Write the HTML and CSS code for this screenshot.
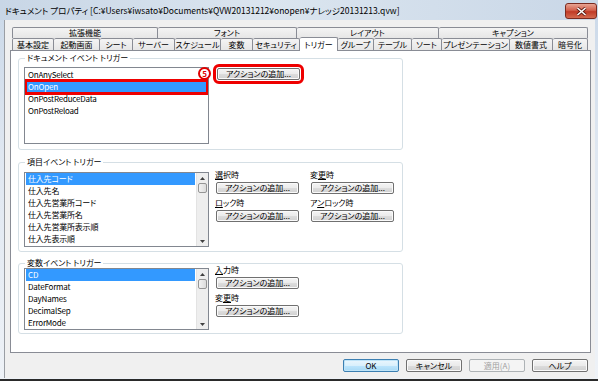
FILE: index.html
```html
<!DOCTYPE html>
<html lang="ja">
  <head>
    <meta charset="UTF-8" />
    <title>ドキュメント プロパティ</title>
    <link rel="stylesheet" href="styles.css">
  </head>
  <body>
    <div class="window">
      <div class="titlebar">
        <span class="title">ドキュメント プロパティ [C:¥Users¥iwsato¥Documents¥QVW20131212¥onopen¥ナレッジ20131213.qvw]</span>
        <span class="close">
          <svg width="11" height="9" viewBox="0 0 11 9">
            <path d="M1.5 1 L9.5 8 M9.5 1 L1.5 8" stroke="#5a1a12" stroke-width="3.2" />
            <path d="M1.5 1 L9.5 8 M9.5 1 L1.5 8" stroke="#ffffff" stroke-width="1.6" />
          </svg>
        </span>
      </div>

      <div class="client">
        <div class="tabs">
          <div class="tabrow upper">
            <div class="tab">拡張機能</div>
            <div class="tab">フォント</div>
            <div class="tab">レイアウト</div>
            <div class="tab">キャプション</div>
          </div>
          <div class="tabrow lower">
            <div class="tab">基本設定</div>
            <div class="tab">起動画面</div>
            <div class="tab">シート</div>
            <div class="tab">サーバー</div>
            <div class="tab">スケジュール</div>
            <div class="tab">変数</div>
            <div class="tab">セキュリティ</div>
            <div class="tab active">トリガー</div>
            <div class="tab">グループ</div>
            <div class="tab">テーブル</div>
            <div class="tab">ソート</div>
            <div class="tab">プレゼンテーション</div>
            <div class="tab">数値書式</div>
            <div class="tab">暗号化</div>
          </div>
        </div>

        <div class="panel">
          <fieldset class="group doc">
            <legend>ドキュメント イベント トリガー</legend>
            <div class="group-body">
              <div class="listbox">
                <ul class="items">
                  <li>OnAnySelect</li>
                  <li class="sel marked">OnOpen</li>
                  <li>OnPostReduceData</li>
                  <li>OnPostReload</li>
                </ul>
              </div>
              <div class="single">
                <span class="step">5</span>
                <button class="btn marked">アクションの追加...</button>
              </div>
            </div>
          </fieldset>

          <fieldset class="group field">
            <legend>項目イベント トリガー</legend>
            <div class="group-body">
              <div class="listbox">
                <ul class="items">
                  <li class="sel">仕入先コード</li>
                  <li>仕入先名</li>
                  <li>仕入先営業所コード</li>
                  <li>仕入先営業所名</li>
                  <li>仕入先営業所表示順</li>
                  <li>仕入先表示順</li>
                  <li>仕入先区分</li>
                </ul>
                <div class="scrollbar">
                  <div class="arrow"><svg width="5" height="3" viewBox="0 0 5 3"><path d="M0 3 L2.5 0 L5 3 Z" fill="#404040" /></svg></div>
                  <div class="thumb"></div>
                  <div class="track"></div>
                  <div class="arrow"><svg width="5" height="3" viewBox="0 0 5 3"><path d="M0 0 L2.5 3 L5 0 Z" fill="#404040" /></svg></div>
                </div>
              </div>
              <div class="actions two">
                <div class="action">
                  <div class="label"><u>選</u>択時</div>
                  <button class="btn">アクションの追加...</button>
                </div>
                <div class="action">
                  <div class="label">変<u>更</u>時</div>
                  <button class="btn">アクションの追加...</button>
                </div>
                <div class="action">
                  <div class="label"><u>ロ</u>ック時</div>
                  <button class="btn">アクションの追加...</button>
                </div>
                <div class="action">
                  <div class="label">ア<u>ン</u>ロック時</div>
                  <button class="btn">アクションの追加...</button>
                </div>
              </div>
            </div>
          </fieldset>

          <fieldset class="group vars">
            <legend>変数イベント トリガー</legend>
            <div class="group-body">
              <div class="listbox">
                <ul class="items">
                  <li class="sel">CD</li>
                  <li>DateFormat</li>
                  <li>DayNames</li>
                  <li>DecimalSep</li>
                  <li>ErrorMode</li>
                </ul>
                <div class="scrollbar">
                  <div class="arrow"><svg width="5" height="3" viewBox="0 0 5 3"><path d="M0 3 L2.5 0 L5 3 Z" fill="#404040" /></svg></div>
                  <div class="thumb"></div>
                  <div class="track"></div>
                  <div class="arrow"><svg width="5" height="3" viewBox="0 0 5 3"><path d="M0 0 L2.5 3 L5 0 Z" fill="#404040" /></svg></div>
                </div>
              </div>
              <div class="actions">
                <div class="action">
                  <div class="label"><u>入</u>力時</div>
                  <button class="btn">アクションの追加...</button>
                </div>
                <div class="action">
                  <div class="label">変<u>更</u>時</div>
                  <button class="btn">アクションの追加...</button>
                </div>
              </div>
            </div>
          </fieldset>
        </div>

        <div class="footer">
          <button class="btn wide default">OK</button>
          <button class="btn wide">キャンセル</button>
          <button class="btn wide" disabled>適用(A)</button>
          <button class="btn wide">ヘルプ</button>
        </div>
      </div>
    </div>
  </body>
</html>
```

FILE: styles.css
```css
body {
  margin: 0;
  background: #ffffff;
  font-family: "Noto Sans CJK JP", sans-serif;
  font-feature-settings: "palt";
  font-size: 8px;
  color: #000000;
}

.window {
  width: 598px;
  height: 381px;
  box-sizing: border-box;
  display: flex;
  flex-direction: column;
  background: linear-gradient(#cad8e8, #dfe7f1 40%, #eef2f7);
  border-bottom: 2px solid #2a2a2a;
}

.titlebar {
  height: 20px;
  display: flex;
  align-items: flex-start;
  padding-left: 5px;
  background: linear-gradient(90deg, #c8d6e6, #dbe5ef 45%, #c9d7e7);
}

.title {
  font-size: 8.5px;
  line-height: 20px;
  white-space: nowrap;
}

.close {
  margin: 3px 1px 0 auto;
  width: 30px;
  height: 14px;
  display: flex;
  align-items: center;
  justify-content: center;
  border: 1px solid #7a2b20;
  border-radius: 3px;
  background: linear-gradient(#e8a493, #d2604c 45%, #c03a26 55%, #d46a50);
}

.client {
  flex: 1;
  margin: 0 3px 1px 4px;
  padding: 7px 4px 0 5px;
  background: #f0f0f0;
  border-left: 1px solid #9a9ea4;
}

/* tabs */
.tabs {
  margin: 0 3px 0 2px;
}

.tabrow {
  display: flex;
}

.tab {
  flex: none;
  box-sizing: border-box;
  text-align: center;
  white-space: nowrap;
  border: 1px solid #898c95;
  border-left: none;
  border-bottom: none;
  border-radius: 2px 2px 0 0;
  background: linear-gradient(#f4f4f4, #e6e6e6);
}

.tab:first-child {
  border-left: 1px solid #898c95;
}

.upper .tab {
  height: 11px;
  line-height: 10px;
}

.upper .tab:nth-child(1) { width: 146px; }
.upper .tab:nth-child(2) { width: 139px; }
.upper .tab:nth-child(3) { width: 142px; }
.upper .tab:nth-child(4) { width: 149px; }

.lower .tab {
  height: 12px;
  line-height: 11px;
}

.lower .tab:nth-child(1) { width: 42px; }
.lower .tab:nth-child(2) { width: 46px; }
.lower .tab:nth-child(3) { width: 33px; }
.lower .tab:nth-child(4) { width: 42px; }
.lower .tab:nth-child(5) { width: 46px; }
.lower .tab:nth-child(6) { width: 32px; }
.lower .tab:nth-child(7) { width: 47px; }
.lower .tab:nth-child(8) { width: 38px; }
.lower .tab:nth-child(9) { width: 36px; }
.lower .tab:nth-child(10) { width: 38px; }
.lower .tab:nth-child(11) { width: 30px; }
.lower .tab:nth-child(12) { width: 68px; }
.lower .tab:nth-child(13) { width: 43px; }
.lower .tab:nth-child(14) { width: 35px; }

.lower .tab.active {
  position: relative;
  z-index: 1;
  height: 14px;
  margin-top: -1px;
  margin-bottom: -1px;
  line-height: 13px;
  background: #ffffff;
}

/* panel */
.panel {
  height: 303px;
  box-sizing: border-box;
  padding: 2px 0 0 7px;
  background: #ffffff;
  border: 1px solid #898c95;
}

.group {
  width: 385px;
  box-sizing: border-box;
  margin: 0;
  padding: 4px 6px 5px 5px;
  border: 1px solid #d5dfe5;
  border-radius: 3px;
}

.group legend {
  padding: 0 2px;
  margin-left: 1px;
  line-height: 10px;
}

.group.field {
  margin-top: 7px;
  padding-top: 5px;
  padding-bottom: 4px;
}

.group.vars {
  margin-top: 6px;
  padding-top: 0;
  padding-bottom: 3px;
}

.group-body {
  display: flex;
  align-items: flex-start;
}

/* list boxes */
.listbox {
  width: 185px;
  box-sizing: border-box;
  display: flex;
  border: 1px solid #828790;
  background: #ffffff;
}

.doc .listbox {
  height: 77px;
  padding-top: 1px;
}

.field .listbox {
  height: 75px;
  overflow: hidden;
}

.vars .listbox {
  height: 62px;
  overflow: hidden;
}

.items {
  flex: 1;
  margin: 0;
  padding: 0 1px;
  list-style: none;
  overflow: hidden;
  letter-spacing: -0.2px;
}

.items li {
  height: 12px;
  line-height: 12px;
  padding-left: 2px;
  white-space: nowrap;
}

.items li.sel {
  background: #3399ff;
  color: #ffffff;
}

.items li.marked {
  outline: 3px solid #ee0000;
  outline-offset: -1px;
}

.scrollbar {
  width: 11px;
  display: flex;
  flex-direction: column;
  align-items: center;
  background: #eeeeee;
  border-left: 1px solid #e3e3e3;
}

.arrow {
  height: 10px;
  display: flex;
  align-items: center;
}

.thumb {
  width: 9px;
  height: 10px;
  box-sizing: border-box;
  border: 1px solid #959595;
  border-radius: 2px;
  background: linear-gradient(90deg, #f2f2f2, #dcdcdc);
}

.track {
  flex: 1;
}

/* buttons */
.btn {
  width: 83px;
  height: 12px;
  padding: 0;
  font-family: inherit;
  font-feature-settings: "palt";
  font-size: 8px;
  line-height: 10px;
  color: #000000;
  border: 1px solid #707070;
  border-radius: 2px;
  background: linear-gradient(#f4f4f4, #ebebeb 50%, #dddddd 50%, #d0d0d0);
  box-shadow: inset 0 0 0 1px #fafafa;
}

.btn.marked {
  outline: 3px solid #ee0000;
  outline-offset: 1px;
}

.single {
  position: relative;
  margin: 1px 0 0 8px;
}

.step {
  position: absolute;
  left: -19px;
  top: -1px;
  width: 9px;
  height: 9px;
  border: 2px solid #e00000;
  border-radius: 50%;
  background: #ffffff;
  color: #e00000;
  font-weight: bold;
  font-size: 8px;
  line-height: 9px;
  text-align: center;
}

.actions {
  margin: -3px 0 0 6px;
}

.actions.two {
  display: grid;
  grid-template-columns: 84px 84px;
  column-gap: 11px;
  margin-top: -2px;
}

.action {
  margin-bottom: 4px;
}

.label {
  line-height: 10px;
  white-space: nowrap;
}

.label u {
  text-decoration-thickness: 1px;
  text-underline-offset: 1px;
}

.action .btn {
  display: block;
  margin: 2px 0 0 1px;
}

/* footer */
.footer {
  display: flex;
  justify-content: flex-end;
  gap: 7px;
  margin: 6px 3px 0 0;
}

.btn.wide {
  width: 56px;
  height: 13px;
}

.btn.default {
  border-color: #3c7fb1;
  box-shadow: inset 0 0 0 1px #bfe4f8;
  background: linear-gradient(#eaf6fd, #d9f0fc 50%, #bee6fd 50%, #a7d9f5);
}

.btn:disabled {
  color: #a0a0a0;
  border-color: #adb2b5;
  background: #f4f4f4;
  box-shadow: none;
}
```
